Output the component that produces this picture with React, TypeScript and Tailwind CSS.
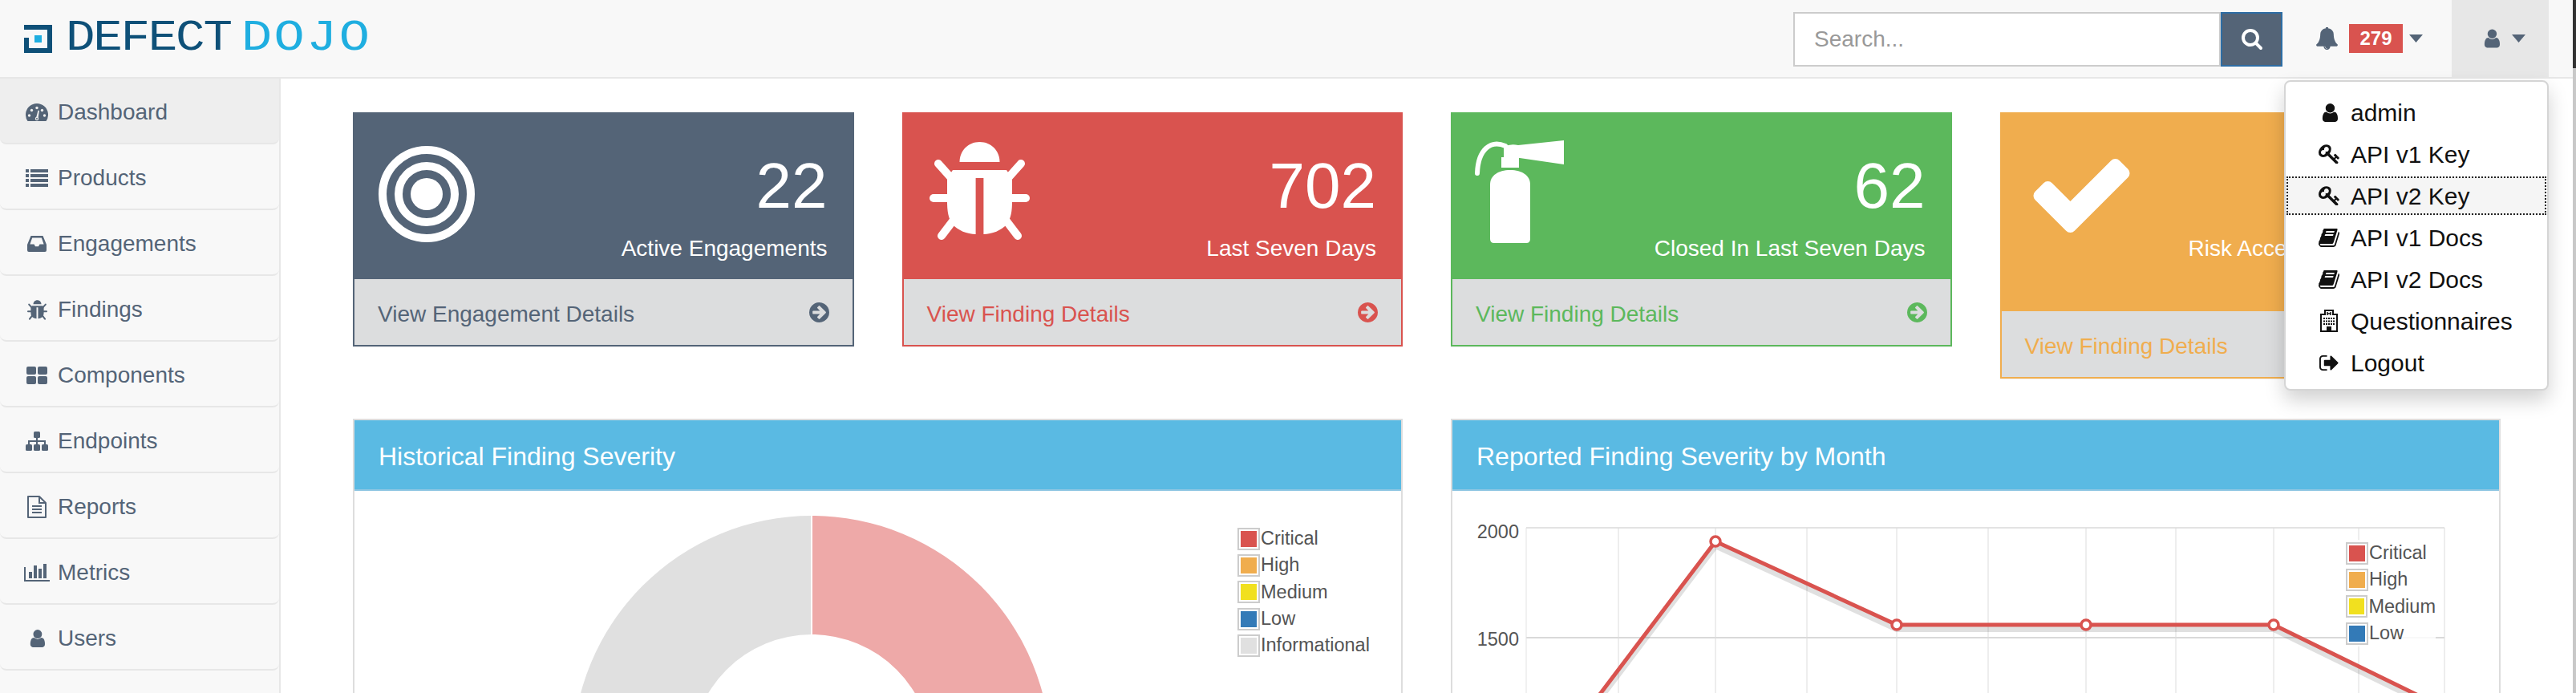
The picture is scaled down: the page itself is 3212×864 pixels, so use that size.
import React from "react";

const GRID_X = [2019, 2140, 2254, 2366, 2480, 2602, 2714, 2836, 2942, 3049];

const P = {
  user: "M1536 1399q0 109-62.5 187t-150.5 78h-854q-88 0-150.5-78t-62.5-187q0-85 8.5-160.5t31.5-152 58.5-131 94-89 134.5-34.5q131 128 313 128t313-128q76 0 134.5 34.5t94 89 58.5 131 31.5 152 8.5 160.5zm-256-887q0 159-112.5 271.5t-271.5 112.5-271.5-112.5-112.5-271.5 112.5-271.5 271.5-112.5 271.5 112.5 112.5 271.5z",
  search: "M1216 832q0-185-131.5-316.5t-316.5-131.5-316.5 131.5-131.5 316.5 131.5 316.5 316.5 131.5 316.5-131.5 131.5-316.5zm512 832q0 52-38 90t-90 38q-54 0-90-38l-343-342q-179 124-399 124-143 0-273.5-55.5t-225-150-150-225-55.5-273.5 55.5-273.5 150-225 225-150 273.5-55.5 273.5 55.5 225 150 150 225 55.5 273.5q0 220-124 399l343 343q37 37 37 90z",
  bell: "M912 1696q0-16-16-16-59 0-101.5-42.5t-42.5-101.5q0-16-16-16t-16 16q0 73 51.5 124.5t124.5 51.5q16 0 16-16zm816-288q0 52-38 90t-90 38h-448q0 106-75 181t-181 75-181-75-75-181h-448q-52 0-90-38t-38-90q50-42 91-88t85-119.5 74.5-158.5 50-206 19.5-260q0-152 117-282.5t307-158.5q-8-19-8-39 0-40 28-68t68-28 68 28 28 68q0 20-8 39 190 28 307 158.5t117 282.5q0 139 19.5 260t50 206 74.5 158.5 85 119.5 91 88z",
  check: "M1671 566q0 40-28 68l-724 724-136 136q-28 28-68 28t-68-28l-136-136-362-362q-28-28-28-68t28-68l136-136q28-28 68-28t68 28l294 295 656-657q28-28 68-28t68 28l136 136q28 28 28 68z",
  arrow: "M1285 896q0-27-18-45l-91-91-362-362q-18-18-45-18t-45 18l-91 91q-18 18-18 45t18 45l189 189h-502q-26 0-45 19t-19 45v128q0 26 19 45t45 19h502l-189 189q-19 19-19 45t19 45l91 91q18 18 45 18t45-18l362-362 91-91q18-18 18-45zm251 0q0 209-103 385.5t-279.5 279.5-385.5 103-385.5-103-279.5-279.5-103-385.5 103-385.5 279.5-279.5 385.5-103 385.5 103 279.5 279.5 103 385.5z",
  key: "M832 512q0-80-56-136t-136-56-136 56-56 136q0 42 19 83-41-19-83-19-80 0-136 56t-56 136 56 136 136 56 136-56 56-136q0-42-19-83 41 19 83 19 80 0 136-56t56-136zm851 704q0 17-49 66t-66 49q-9 0-28.5-16t-36.5-33-38.5-40-24.5-26l-96 96 220 220q28 28 28 68 0 42-39 81t-81 39q-40 0-68-28l-671-671q-176 131-365 131-163 0-265.5-102.5t-102.5-265.5q0-160 95-313t248-248 313-95q163 0 265.5 102.5t102.5 265.5q0 189-131 365l355 355 96-96q-3-3-26-24.5t-40-38.5-33-36.5-16-28.5q0-17 49-66t66-49q13 0 23 10 6 6 46 44.5t82 79.5 86.5 86 73 78 28.5 41z",
  book: "M1703 478q40 57 18 129l-275 906q-19 64-76.5 107.5t-122.5 43.5h-923q-77 0-148.5-53.5t-99.5-131.5q-24-67-2-127 0-4 3-27t4-37q1-8-3-21.5t-3-19.5q2-11 8-21t16.5-23.5 16.5-23.5q23-38 45-91.5t30-91.5q3-10 .5-30t-.5-28q3-11 17-28t17-23q21-36 42-92t25-90q1-9-2.5-32t.5-28q4-13 22-30.5t22-22.5q19-26 42.5-84.5t27.5-96.5q1-8-3-25.5t-2-26.5q2-8 9-18t18-23 17-21q8-12 16.5-30.5t15-35 16-36 19.5-32 26.5-23.5 36-11.5 47.5 5.5l-1 3q38-9 51-9h761q74 0 114 56t18 130l-274 906q-36 119-71.5 153.5t-128.5 34.5h-869q-27 0-38 15-11 16-1 43 24 70 144 70h923q29 0 56-15.5t35-41.5l300-987q7-22 5-57 38 15 59 43zm-1064 2q-4 13 2 22.5t20 9.5h608q13 0 25.5-9.5t16.5-22.5l21-64q4-13-2-22.5t-20-9.5h-608q-13 0-25.5 9.5t-16.5 22.5zm-83 256q-4 13 2 22.5t20 9.5h608q13 0 25.5-9.5t16.5-22.5l21-64q4-13-2-22.5t-20-9.5h-608q-13 0-25.5 9.5t-16.5 22.5z",
  signout: "M704 1440q0 4 1 20t.5 26.5-3 23.5-10 19.5-20.5 6.5h-320q-119 0-203.5-84.5t-84.5-203.5v-704q0-119 84.5-203.5t203.5-84.5h320q13 0 22.5 9.5t9.5 22.5q0 4 1 20t.5 26.5-3 23.5-10 19.5-20.5 6.5h-320q-66 0-113 47t-47 113v704q0 66 47 113t113 47h312l11.5 1 11.5 3 8 5.5 7 9 2 13.5zm928-544q0 26-19 45l-544 544q-19 19-45 19t-45-19-19-45v-288h-448q-26 0-45-19t-19-45v-384q0-26 19-45t45-19h448v-288q0-26 19-45t45-19 45 19l544 544q19 19 19 45z",
  bars: "M640 896v512h-256v-512h256zm384-512v1024h-256v-1024h256zm1024 1152v128h-2048v-1152h128v1024h1920zm-640-896v768h-256v-768h256zm384-384v1152h-256v-1152h256z",
};

type IP = { className?: string };
const Fa = ({ d, box, className }: { d: string; box: string; className?: string }) => (
  <svg viewBox={box} className={className} fill="currentColor" aria-hidden="true">
    <path d={d} />
  </svg>
);

const UserI = ({ className }: IP) => <Fa d={P.user} box="128 128 1408 1536" className={className} />;
const SearchI = ({ className }: IP) => <Fa d={P.search} box="64 128 1664 1664" className={className} />;
const BellI = ({ className }: IP) => <Fa d={P.bell} box="64 64 1664 1728" className={className} />;
const ArrowI = ({ className }: IP) => <Fa d={P.arrow} box="0 128 1536 1536" className={className} />;
const KeyI = ({ className }: IP) => <Fa d={P.key} box="0 128 1690 1540" className={className} />;
const BookI = ({ className }: IP) => <Fa d={P.book} box="64 192 1664 1472" className={className} />;
const SignoutI = ({ className }: IP) => <Fa d={P.signout} box="64 224 1600 1344" className={className} />;
const CheckI = ({ className }: IP) => <Fa d={P.check} box="121 334 1550 1188" className={className} />;
const BarsI = ({ className }: IP) => <Fa d={P.bars} box="0 256 2048 1408" className={className} />;

const GaugeI = ({ className }: IP) => (
  <svg viewBox="0 0 28 22" className={className} aria-hidden="true">
    <path d="M2.5 22A14 14 0 1 1 25.5 22Z" fill="currentColor" />
    <g fill="#eeeeee">
      <circle cx="4.5" cy="15" r="1.7" />
      <circle cx="7.5" cy="8.5" r="1.7" />
      <circle cx="14" cy="5.5" r="1.7" />
      <circle cx="23.5" cy="15" r="1.7" />
      <circle cx="20.5" cy="8.5" r="1.7" />
      <path d="M13 18L15.5 8.5L17 9L15.5 18.5Z" />
      <circle cx="14" cy="19" r="2.2" />
    </g>
    <circle cx="14" cy="19" r="1" fill="currentColor" />
  </svg>
);
const ListI = ({ className }: IP) => (
  <svg viewBox="0 0 28 22" className={className} fill="currentColor" aria-hidden="true">
    {[0, 6, 12, 18].map((y) => (
      <g key={y}>
        <rect x="0" y={y} width="4" height="4" />
        <rect x="6" y={y} width="22" height="4" />
      </g>
    ))}
  </svg>
);
const InboxI = ({ className }: IP) => (
  <svg viewBox="0 0 24 20" className={className} fill="currentColor" aria-hidden="true">
    <path fillRule="evenodd" d="M4.5 0H19.5L24 11V18Q24 20 22 20H2Q0 20 0 18V11ZM6.2 2.5L3.4 10.5H8.5L10 13.2H14L15.5 10.5H20.6L17.8 2.5Z" />
  </svg>
);
const BugI = ({ className }: IP) => (
  <svg viewBox="0 0 125 123" className={className} aria-hidden="true">
    <path d="M37.5 25C37.5 11 48 0 62.5 0C77 0 87.5 11 87.5 25Z" fill="currentColor" />
    <path d="M29 35H96L103 45V75C103 90 100 98 96 103C90 110 78 115 67.4 115V45H57.6V115C47 115 35 110 29 103C25 98 22 90 22 75V45Z" fill="currentColor" />
    <g stroke="currentColor" strokeWidth="10" strokeLinecap="round" fill="none">
      <path d="M11 27L28 46" />
      <path d="M114 27L97 46" />
      <path d="M5 70H24" />
      <path d="M120 70H101" />
      <path d="M15 117L31 96" />
      <path d="M110 117L94 96" />
    </g>
  </svg>
);
const ThI = ({ className }: IP) => (
  <svg viewBox="0 0 26 22" className={className} fill="currentColor" aria-hidden="true">
    <rect x="0" y="0" width="12" height="10" rx="2" />
    <rect x="14" y="0" width="12" height="10" rx="2" />
    <rect x="0" y="12" width="12" height="10" rx="2" />
    <rect x="14" y="12" width="12" height="10" rx="2" />
  </svg>
);
const SitemapI = ({ className }: IP) => (
  <svg viewBox="0 0 28 24" className={className} fill="currentColor" aria-hidden="true">
    <rect x="10" y="0" width="8" height="8" rx="1.5" />
    <rect x="0" y="16" width="8" height="8" rx="1.5" />
    <rect x="10" y="16" width="8" height="8" rx="1.5" />
    <rect x="20" y="16" width="8" height="8" rx="1.5" />
    <path d="M13 8H15V11H25V16H23V13H15V16H13V13H5V16H3V11H13Z" />
  </svg>
);
const FileI = ({ className }: IP) => (
  <svg viewBox="0 0 24 28" className={className} fill="none" stroke="currentColor" strokeWidth="2" aria-hidden="true">
    <path d="M1 1H15L23 9V27H1Z" strokeLinejoin="round" />
    <path d="M15 1V9H23" />
    <path d="M6 13H18M6 17H18M6 21H18" />
  </svg>
);
const CalendarI = ({ className }: IP) => (
  <svg viewBox="0 0 26 28" className={className} fill="currentColor" aria-hidden="true">
    <rect x="5" y="0" width="6" height="7" rx="1.5" />
    <rect x="15" y="0" width="6" height="7" rx="1.5" />
    <rect x="0" y="4" width="26" height="24" rx="2" />
  </svg>
);
const HospitalI = ({ className }: IP) => (
  <svg viewBox="0 0 22 28" className={className} aria-hidden="true">
    <path d="M6 1H16V6H21V27H1V6H6Z" fill="none" stroke="currentColor" strokeWidth="2" />
    <path d="M9 3V7M13 3V7M9 5H13" stroke="currentColor" strokeWidth="1.5" />
    <g fill="currentColor">
      {[10, 13.5, 17].map((y) =>
        [4, 7, 10, 13, 16].map((x) => <rect key={`${x}-${y}`} x={x} y={y} width="2" height="2" />)
      )}
      <rect x="8" y="21" width="6" height="6" />
    </g>
  </svg>
);
const BullseyeI = ({ className }: IP) => (
  <svg viewBox="0 0 120 120" className={className} aria-hidden="true">
    <circle cx="60" cy="60" r="55" fill="none" stroke="currentColor" strokeWidth="10" />
    <circle cx="60" cy="60" r="35" fill="none" stroke="currentColor" strokeWidth="10" />
    <circle cx="60" cy="60" r="20" fill="currentColor" />
  </svg>
);
const ExtinguisherI = ({ className }: IP) => (
  <svg viewBox="0 0 111 131" className={className} aria-hidden="true">
    <path d="M19 58C19 47 29 40 44 40C59 40 69 47 69 58V126Q69 131 64 131H24Q19 131 19 126Z" fill="currentColor" />
    <rect x="33" y="24" width="22" height="13" fill="currentColor" />
    <path d="M36 11Q44 7 54 9L111 3V33L56 25H36Z" fill="currentColor" />
    <path d="M38 10C20 2 4 14 3 44" fill="none" stroke="currentColor" strokeWidth="6" strokeLinecap="round" />
  </svg>
);

const Caret = ({ className }: IP) => (
  <svg viewBox="0 0 17 10" className={className} fill="currentColor" aria-hidden="true">
    <path d="M0 0H17L8.5 10Z" />
  </svg>
);

const navItems = [
  { label: "Dashboard", Icon: GaugeI, size: "w-[28px] h-[22px]", active: true },
  { label: "Products", Icon: ListI, size: "w-[28px] h-[22px]" },
  { label: "Engagements", Icon: InboxI, size: "w-[24px] h-[20px]" },
  { label: "Findings", Icon: BugI, size: "w-[25px] h-[25px]" },
  { label: "Components", Icon: ThI, size: "w-[26px] h-[22px]" },
  { label: "Endpoints", Icon: SitemapI, size: "w-[28px] h-[24px]" },
  { label: "Reports", Icon: FileI, size: "w-[24px] h-[28px]" },
  { label: "Metrics", Icon: BarsI, size: "w-[32px] h-[24px]" },
  { label: "Users", Icon: UserI, size: "w-[20px] h-[24px]" },
  { label: "Calendar", Icon: CalendarI, size: "w-[26px] h-[28px]" },
];

const menuItems = [
  { label: "admin", Icon: UserI, size: "w-[21px] h-[25px]" },
  { label: "API v1 Key", Icon: KeyI, size: "w-[26px] h-[24px]" },
  { label: "API v2 Key", Icon: KeyI, size: "w-[26px] h-[24px]", focus: true },
  { label: "API v1 Docs", Icon: BookI, size: "w-[26px] h-[23px]" },
  { label: "API v2 Docs", Icon: BookI, size: "w-[26px] h-[23px]" },
  { label: "Questionnaires", Icon: HospitalI, size: "w-[22px] h-[28px]" },
  { label: "Logout", Icon: SignoutI, size: "w-[24px] h-[21px]" },
];

const cards = [
  {
    value: "22",
    label: "Active Engagements",
    link: "View Engagement Details",
    border: "border-[#546477]",
    head: "bg-[#546477]",
    text: "text-[#546477]",
    icon: <BullseyeI className="w-[120px] h-[120px] mt-[40px]" />,
  },
  {
    value: "702",
    label: "Last Seven Days",
    link: "View Finding Details",
    border: "border-[#d9534f]",
    head: "bg-[#d9534f]",
    text: "text-[#d9534f]",
    icon: <BugI className="w-[125px] h-[123px] mt-[35px] ml-[2px]" />,
  },
  {
    value: "62",
    label: "Closed In Last Seven Days",
    link: "View Finding Details",
    border: "border-[#5cb85c]",
    head: "bg-[#5cb85c]",
    text: "text-[#5cb85c]",
    icon: <ExtinguisherI className="w-[111px] h-[131px] mt-[30px] -ml-[2px]" />,
  },
  {
    value: "\u00a0",
    label: "Risk Accepted In Last Seven Days",
    link: "View Finding Details",
    border: "border-[#f0ad4e]",
    head: "bg-[#f0ad4e]",
    text: "text-[#f0ad4e]",
    icon: <CheckI className="w-[123px] h-[92px] mt-[56px] ml-[8px]" />,
  },
];

const Legend = ({ items, className }: { items: { name: string; color: string }[]; className: string }) => (
  <div className={className}>
    {items.map((it) => (
      <div key={it.name} className="flex items-center h-[33.3px] text-[23.5px] text-[#545454]">
        <div className="w-[28px] h-[28px] border-2 border-[#cccccc] p-[2px] bg-white">
          <div className={`w-full h-full ${it.color}`} />
        </div>
        <span className="ml-[1px]">{it.name}</span>
      </div>
    ))}
  </div>
);

const severities = [
  { name: "Critical", color: "bg-[#d9534f]" },
  { name: "High", color: "bg-[#f0ad4e]" },
  { name: "Medium", color: "bg-[#f1e01f]" },
  { name: "Low", color: "bg-[#337ab7]" },
];

const Panel = ({ title, children }: { title: string; children: React.ReactNode }) => (
  <div className="border-2 border-[#dddddd] h-[600px] flex flex-col">
    <div className="h-[88px] bg-[#5abae3] border-b-2 border-[#8fc6e2] pl-[30px] pt-[3px] flex items-center text-white text-[32px] shrink-0">
      {title}
    </div>
    <div className="relative flex-1">{children}</div>
  </div>
);

export default function App() {
  return (
    <div className="w-full h-[864px] overflow-hidden flex bg-white font-['Liberation_Sans',Arial,sans-serif]">
      <div className="flex-1 min-w-0 flex flex-col relative">
        <header className="h-[98px] shrink-0 bg-[#f8f8f8] border-b-2 border-[#e7e7e7] flex items-stretch pl-[30px] pr-[30px]">
          <div className="flex items-center h-full">
            <svg viewBox="0 0 35 35" className="w-[35px] h-[35px] text-[#0e5078]" aria-hidden="true">
              <path d="M0 0H35V35H0V16H6V29H29V6H0Z" fill="currentColor" />
              <rect x="13" y="13" width="9" height="9" fill="#1faee0" />
            </svg>
            <span className="ml-[17px] w-[219px] inline-block origin-left scale-x-[1.15] font-['Liberation_Mono',monospace] font-normal text-[53px] leading-none tracking-[-2px] text-[#0e5078]">DEFECT</span>
            <span className="inline-block origin-left scale-x-[1.2] font-['Liberation_Mono',monospace] font-normal text-[53px] leading-none tracking-[2px] text-[#1faee0]">DOJO</span>
          </div>
          <div className="flex-1" />
          <div className="flex items-center pt-[2px]">
            <div className="w-[533px] h-[68px] border-2 border-[#cccccc] bg-white flex items-center pl-[24px] text-[28px] text-[#999999]">
              Search...
            </div>
            <div className="w-[77px] h-[68px] bg-[#546477] border-2 border-[#2e6da4] flex items-center justify-center text-white">
              <SearchI className="w-[26px] h-[26px]" />
            </div>
          </div>
          <div className="flex items-center ml-[42px] text-[#546477]">
            <BellI className="w-[27px] h-[28px]" />
            <span className="ml-[14px] w-[67px] h-[36px] bg-[#d9534f] text-white text-[24px] font-bold flex items-center justify-center">279</span>
            <Caret className="ml-[8px] w-[17px] h-[10px]" />
          </div>
          <div className="ml-[36px] w-[121px] h-[96px] bg-[#e7e7e7] flex items-center pl-[39px] text-[#546477]">
            <UserI className="w-[21px] h-[24px]" />
            <Caret className="ml-[15px] w-[17px] h-[10px]" />
          </div>
        </header>

        <div className="flex-1 min-h-0 flex">
          <nav className="w-[350px] shrink-0 bg-[#f8f8f8] border-r-2 border-[#e7e7e7]">
            {navItems.map(({ label, Icon, size, active }) => (
              <div
                key={label}
                className={`h-[82px] pl-[28px] pt-[4px] flex items-center border-b-2 border-[#e7e7e7] rounded-b-[8px] text-[28px] text-[#546477] ${active ? "bg-[#eeeeee]" : ""}`}
              >
                <span className="w-[36px] flex justify-center">
                  <Icon className={size} />
                </span>
                <span className="ml-[8px]">{label}</span>
              </div>
            ))}
          </nav>

          <main className="flex-1 min-w-0 bg-white px-[90px] pt-[42px]">
            <div className="grid grid-cols-4 gap-[60px] items-start mb-[50px]">
              {cards.map((c) => (
                <div key={c.label} className={`border-2 ${c.border} shadow-[0_1px_2px_rgba(0,0,0,0.05)]`}>
                  <div className={`${c.head} flex justify-between pl-[30px] pr-[31px] text-white`}>
                    <div>{c.icon}</div>
                    <div className="w-[370px] text-right pt-[46px] pb-[18px]">
                      <div className="text-[80px] leading-[88px]">{c.value}</div>
                      <div className="text-[28px] leading-[40px] mt-[14px]">{c.label}</div>
                    </div>
                  </div>
                  <div className={`h-[82px] bg-[#dcddde] px-[29px] pt-[6px] flex items-center justify-between text-[28px] ${c.text}`}>
                    <span>{c.link}</span>
                    <ArrowI className="w-[25px] h-[25px] -mt-[5px]" />
                  </div>
                </div>
              ))}
            </div>

            <div className="grid grid-cols-2 gap-[60px]">
              <Panel title="Historical Finding Severity">
                <svg viewBox="442 612 1305 400" className="w-[1305px] h-[400px]" aria-hidden="true">
                  <path d="M1012 643A298 298 0 0 1 1012 1239V1091A150 150 0 0 0 1012 791Z" fill="#eea9a8" />
                  <path d="M1012 643A298 298 0 0 0 1012 1239V1091A150 150 0 0 1 1012 791Z" fill="#e0e0e0" />
                  <path d="M1012 640V795" stroke="#ffffff" strokeWidth="2" />
                </svg>
                <Legend
                  className="absolute left-[1101px] top-[43px]"
                  items={[...severities, { name: "Informational", color: "bg-[#e0e0e0]" }]}
                />
              </Panel>
              <Panel title="Reported Finding Severity by Month">
                <svg viewBox="1812 612 1305 400" className="w-[1305px] h-[400px]" aria-hidden="true">
                  <path d="M1904 658H3049" stroke="#e3e3e3" strokeWidth="2" />
                  <path d="M1904 795H3049" stroke="#d9d9d9" strokeWidth="2" />
                  <path d="M1904 658V1012" stroke="#e3e3e3" strokeWidth="1" />
                  {GRID_X.map((x) => (
                    <path key={x} d={`M${x} 658V1012`} stroke="#dcdcdc" strokeWidth="1" />
                  ))}
                  <polyline points="1904,992 2140,680 2366,784 2602,784 2836,784 3049,888" fill="none" stroke="#000000" strokeOpacity="0.12" strokeWidth="8" />
                  <polyline points="1904,987 2140,675 2366,779 2602,779 2836,779 3049,883" fill="none" stroke="#d9534f" strokeWidth="5" />
                  {[
                    [2140, 675],
                    [2366, 779],
                    [2602, 779],
                    [2836, 779],
                  ].map(([x, y]) => (
                    <circle key={x} cx={x} cy={y} r="6" fill="#ffffff" stroke="#d9534f" strokeWidth="3.5" />
                  ))}
                  <text x="1895" y="671" textAnchor="end" fontSize="23.5" fill="#545454">2000</text>
                  <text x="1895" y="805" textAnchor="end" fontSize="23.5" fill="#545454">1500</text>
                </svg>
                <Legend className="absolute left-[1114px] top-[61px] w-[112px] bg-white/85" items={severities} />
              </Panel>
            </div>
          </main>
        </div>

        <div className="absolute left-[2848px] top-[100px] w-[330px] h-[387px] bg-white border-2 border-[#d5d5d5] rounded-[8px] shadow-[0_12px_24px_rgba(0,0,0,0.18)] pt-[14px] px-[1px] flex flex-col gap-[4px]">
          {menuItems.map(({ label, Icon, size, focus }) => (
            <div
              key={label}
              className={`h-[48px] shrink-0 flex items-center text-[30px] text-[#111111] ${focus ? "bg-[#f5f5f5] border-2 border-dotted border-[#222222]" : "border-2 border-transparent"}`}
            >
              <span className="w-[48px] ml-[30px] flex justify-center -translate-x-[3px]">
                <Icon className={size} />
              </span>
              <span>{label}</span>
            </div>
          ))}
        </div>
      </div>

      <div className="w-[4px] shrink-0 bg-[#c8c8c8] flex flex-col">
        <div className="h-[85px] bg-[#333333]" />
      </div>
    </div>
  );
}
